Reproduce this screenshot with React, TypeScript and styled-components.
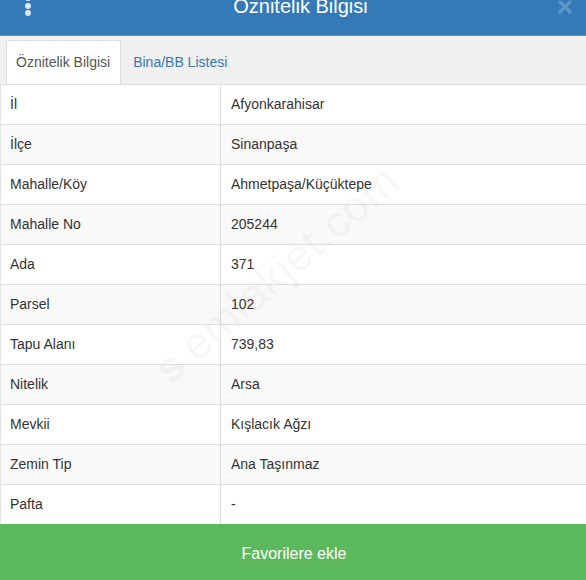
import styled, { createGlobalStyle } from 'styled-components';

const GlobalStyle = createGlobalStyle`
  html, body {
    margin: 0;
    padding: 0;
    background: #fff;
  }
  body {
    font-family: "Liberation Sans", Arial, Helvetica, sans-serif;
    color: #333;
  }
`;

const parcelInfo: [string, string][] = [
  ['İl', 'Afyonkarahisar'],
  ['İlçe', 'Sinanpaşa'],
  ['Mahalle/Köy', 'Ahmetpaşa/Küçüktepe'],
  ['Mahalle No', '205244'],
  ['Ada', '371'],
  ['Parsel', '102'],
  ['Tapu Alanı', '739,83'],
  ['Nitelik', 'Arsa'],
  ['Mevkii', 'Kışlacık Ağzı'],
  ['Zemin Tip', 'Ana Taşınmaz'],
  ['Pafta', '-'],
];

export default function App() {
  return (
    <>
      <GlobalStyle />
      <Panel>
        <Header>
          <MenuDots>
            <span />
            <span />
            <span />
          </MenuDots>
          <HeaderTitle>Öznitelik Bilgisi</HeaderTitle>
          <CloseButton aria-label="Kapat">
            <svg width="14" height="14" viewBox="0 0 14 14">
              <path d="M2 2 L12 12 M12 2 L2 12" stroke="currentColor" strokeWidth="3.2" strokeLinecap="round" />
            </svg>
          </CloseButton>
        </Header>

        <TabBar>
          <Tab $active>Öznitelik Bilgisi</Tab>
          <Tab>Bina/BB Listesi</Tab>
        </TabBar>

        <InfoTable>
          {parcelInfo.map(([label, value]) => (
            <Row key={label}>
              <LabelCell>{label}</LabelCell>
              <ValueCell>{value}</ValueCell>
            </Row>
          ))}
          <Watermark>
            <WatermarkLogo>s</WatermarkLogo>emlakjet.com
          </Watermark>
        </InfoTable>

        <FavoriteButton>Favorilere ekle</FavoriteButton>
      </Panel>
    </>
  );
}

const Panel = styled.div`
  width: 586px;
  height: 580px;
  display: flex;
  flex-direction: column;
  overflow: hidden;
`;

const Header = styled.div`
  height: 35px;
  flex-shrink: 0;
  background: #337ab7;
  border-bottom: 1px solid #5a90c0;
  display: flex;
  align-items: flex-start;
  justify-content: space-between;
  padding: 0 14px 0 25px;
  overflow: hidden;
`;

const MenuDots = styled.div`
  display: flex;
  flex-direction: column;
  gap: 1.5px;
  margin-top: -5px;
  width: 10px;

  span {
    width: 6px;
    height: 6px;
    border-radius: 50%;
    background: #dce9f5;
  }
`;

const HeaderTitle = styled.div`
  font-size: 20px;
  line-height: 20px;
  color: #fff;
  margin-top: -4px;
  margin-left: 8px;
`;

const CloseButton = styled.div`
  color: rgba(255, 255, 255, 0.22);
  display: flex;
`;

const TabBar = styled.div`
  height: 48px;
  flex-shrink: 0;
  background: #f0f0f0;
  display: flex;
  align-items: flex-end;
  padding-left: 6px;
`;

const Tab = styled.div<{ $active?: boolean }>`
  height: 44px;
  box-sizing: border-box;
  display: flex;
  align-items: center;
  padding: 0 10px 1px 9px;
  margin-right: 2px;
  font-size: 14px;
  color: ${(p) => (p.$active ? '#555' : '#337ab7')};
  background: ${(p) => (p.$active ? '#fff' : 'transparent')};
  border: 1px solid ${(p) => (p.$active ? '#ddd' : 'transparent')};
  border-bottom: none;
  border-radius: 3px 3px 0 0;
`;

const InfoTable = styled.div`
  position: relative;
  flex-shrink: 0;
  border-left: 1px solid #e4e4e4;
  overflow: hidden;
`;

const Row = styled.div`
  display: grid;
  grid-template-columns: 220px 1fr;
  height: 40px;
  box-sizing: border-box;
  border-top: 1px solid #ddd;
  font-size: 14px;
  color: #333;

  &:nth-child(even) {
    background: #f9f9f9;
  }
`;

const LabelCell = styled.div`
  display: flex;
  align-items: center;
  padding: 0 0 1px 9px;
  border-right: 1px solid #ddd;
`;

const ValueCell = styled.div`
  display: flex;
  align-items: center;
  padding: 0 0 1px 10px;
`;

const Watermark = styled.div`
  position: absolute;
  left: 122px;
  top: 165px;
  font-size: 44px;
  color: rgba(0, 0, 0, 0.055);
  transform: rotate(-41deg);
  transform-origin: center;
  white-space: nowrap;
  pointer-events: none;
  letter-spacing: 1px;
`;

const WatermarkLogo = styled.span`
  font-weight: bold;
  margin-right: 10px;
`;

const FavoriteButton = styled.div`
  flex: 1;
  background: #5cb85c;
  color: #fff;
  font-size: 16px;
  display: flex;
  align-items: center;
  justify-content: center;
  padding: 3px 0 0 2px;
`;
